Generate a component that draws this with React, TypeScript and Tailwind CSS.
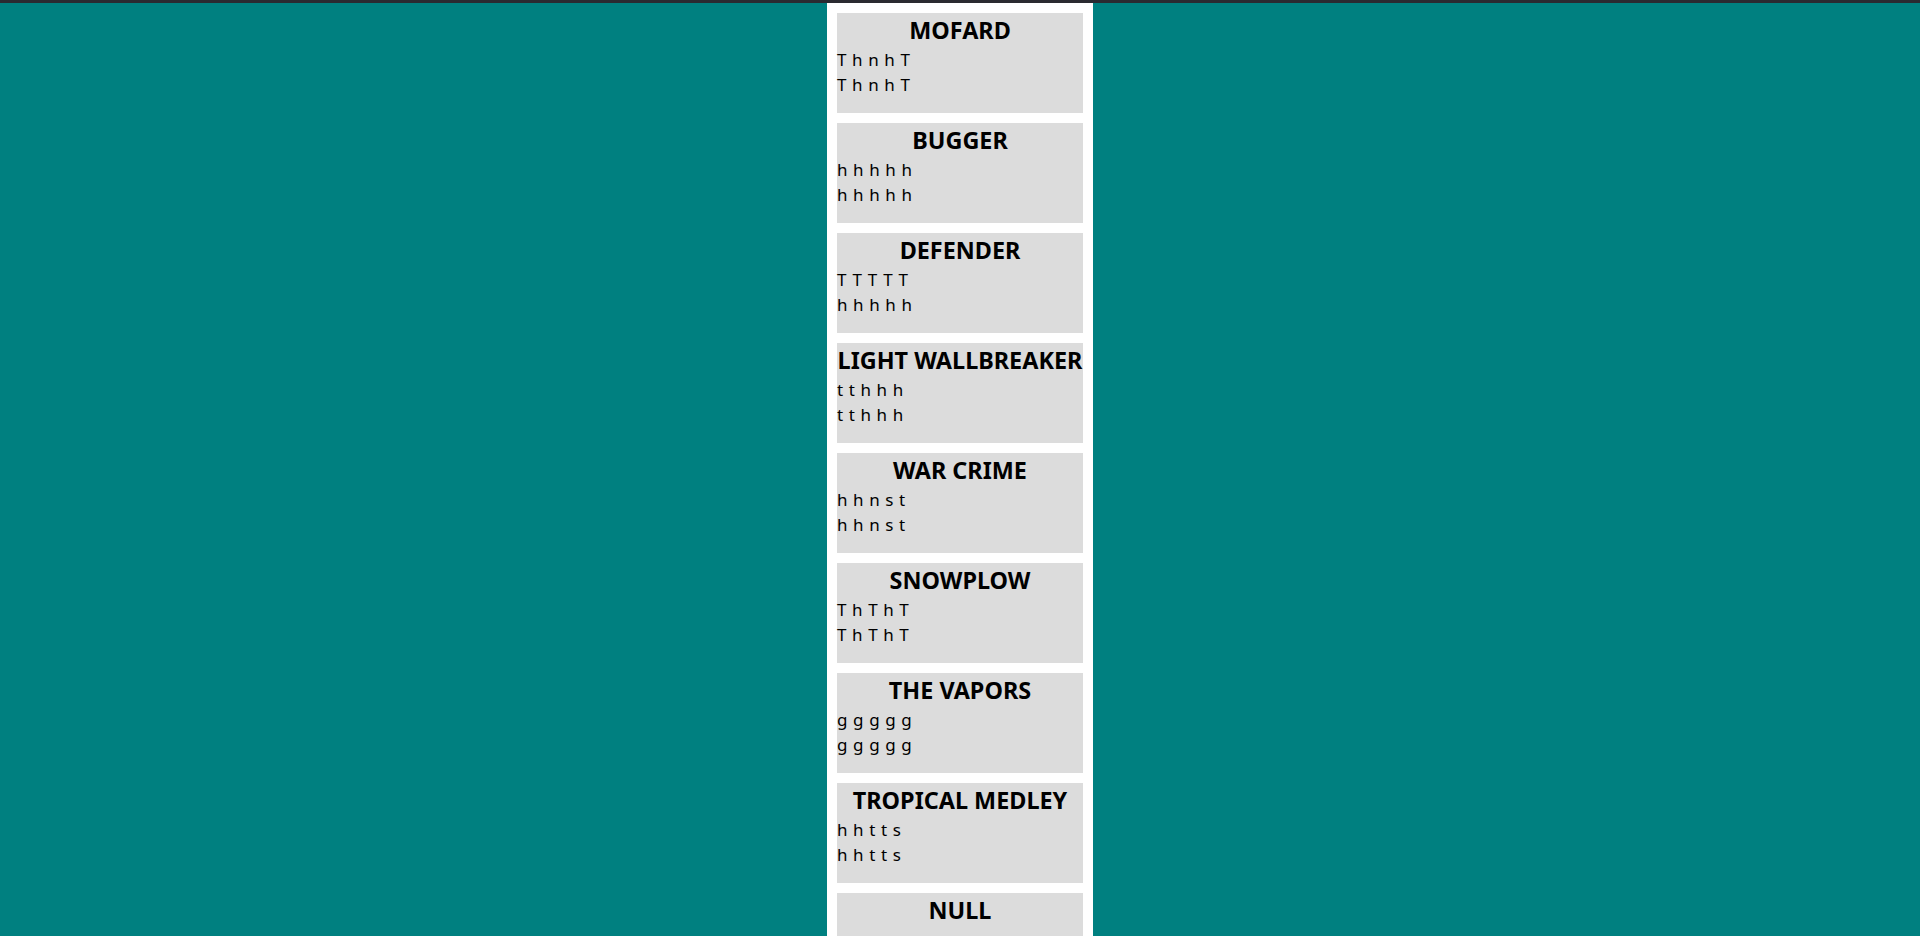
import React from "react";

const CARDS: { name: string; rows: string[] }[] = [
  { name: "MOFARD", rows: ["ThnhT", "ThnhT"] },
  { name: "BUGGER", rows: ["hhhhh", "hhhhh"] },
  { name: "DEFENDER", rows: ["TTTTT", "hhhhh"] },
  { name: "LIGHT WALLBREAKER", rows: ["tthhh", "tthhh"] },
  { name: "WAR CRIME", rows: ["hhnst", "hhnst"] },
  { name: "SNOWPLOW", rows: ["ThThT", "ThThT"] },
  { name: "THE VAPORS", rows: ["ggggg", "ggggg"] },
  { name: "TROPICAL MEDLEY", rows: ["hhtts", "hhtts"] },
  { name: "NULL", rows: [] },
];

function Card({ name, rows }: { name: string; rows: string[] }) {
  return (
    <div className="h-[100px] shrink-0 bg-[#dcdcdc] text-black">
      <h2 className="text-center text-[23.4px] leading-[34px] font-bold whitespace-nowrap">{name}</h2>
      <div className="pt-[1px]">
        {rows.map((r, i) => (
          <p key={i} className="text-[17px] leading-[24.5px] tracking-[0.33em]">
            {r}
          </p>
        ))}
      </div>
    </div>
  );
}

export default function App() {
  return (
    <div
      className="flex h-screen flex-col bg-[#008080]"
      style={{ fontFamily: '"Noto Sans", "Open Sans", sans-serif' }}
    >
      <div className="h-[3px] shrink-0 bg-[#2a2a31]" />
      <div className="flex-1 overflow-y-auto [&::-webkit-scrollbar]:w-[4px] [&::-webkit-scrollbar-track]:bg-transparent [&::-webkit-scrollbar-thumb]:bg-[#9e9e9e]">
        <div className="flex justify-center">
          <div className="flex w-[266px] flex-col gap-[10px] bg-white p-[10px]">
            {CARDS.map((c) => (
              <Card key={c.name} name={c.name} rows={c.rows} />
            ))}
          </div>
        </div>
      </div>
    </div>
  );
}
